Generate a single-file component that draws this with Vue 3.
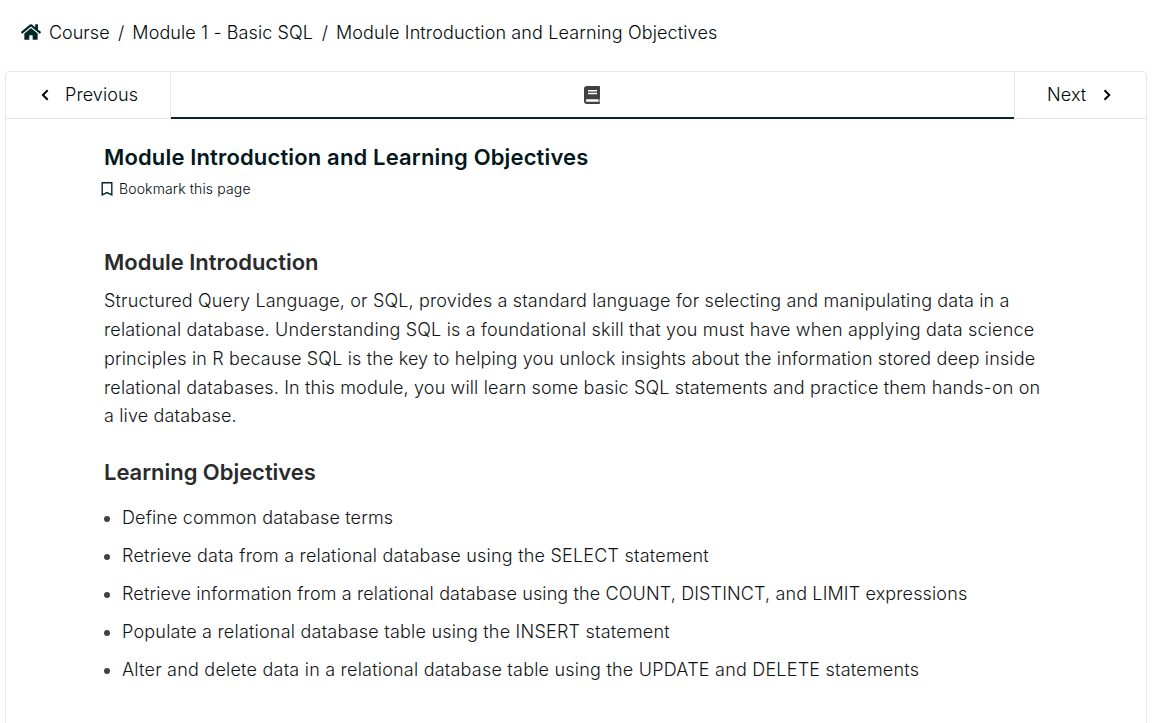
<script setup>
const paragraph = [
  'Structured Query Language, or SQL, provides a standard language for selecting and manipulating data in a',
  'relational database. Understanding SQL is a foundational skill that you must have when applying data science',
  'principles in R because SQL is the key to helping you unlock insights about the information stored deep inside',
  'relational databases. In this module, you will learn some basic SQL statements and practice them hands-on on',
  'a live database.',
]
const objectives = [
  'Define common database terms',
  'Retrieve data from a relational database using the SELECT statement',
  'Retrieve information from a relational database using the COUNT, DISTINCT, and LIMIT expressions',
  'Populate a relational database table using the INSERT statement',
  'Alter and delete data in a relational database table using the UPDATE and DELETE statements',
]
</script>

<template>
  <div class="page">
    <nav class="crumbs">
      <svg class="home" viewBox="0 0 576 512"><path fill="currentColor" d="M280.4 148.3 96 300.1V464a16 16 0 0 0 16 16l112.1-.3a16 16 0 0 0 15.9-16V368a16 16 0 0 1 16-16h64a16 16 0 0 1 16 16v95.6a16 16 0 0 0 16 16.1L464 480a16 16 0 0 0 16-16V300L295.7 148.3a12.2 12.2 0 0 0-15.3 0zM571.6 251.5 488 182.6V44a12 12 0 0 0-12-12h-56a12 12 0 0 0-12 12v72.6L318.5 43a48 48 0 0 0-61 0L4.3 251.5a12 12 0 0 0-1.6 16.9l25.5 31a12 12 0 0 0 16.9 1.6l235.2-193.7a12.2 12.2 0 0 1 15.3 0L530.9 301a12 12 0 0 0 16.9-1.6l25.5-31a12 12 0 0 0-1.7-16.9z"/></svg>
      <span>Course</span><span class="sep">/</span><span class="module">Module 1 - Basic SQL</span><span class="sep">/</span><span class="current">Module Introduction and Learning Objectives</span>
    </nav>
    <main class="panel">
      <div class="tabs">
        <button class="prev"><svg class="chev" viewBox="0 0 8 12"><path d="M6.7 1.2 1.9 6l4.8 4.8"/></svg><span>Previous</span></button>
        <div class="tab"><svg class="book" viewBox="0 0 16 18"><path fill="currentColor" fill-rule="evenodd" d="M3 0H15a1 1 0 0 1 1 1v11.7a1 1 0 0 1-.5.8v2.4a.9.9 0 0 1 .5.8v.4a.9.9 0 0 1-.9.9H3A3 3 0 0 1 0 15V3A3 3 0 0 1 3 0zM4 4v1.500h9V4zm0 2.700v1.500h9V6.700zM3 13.300a1.200 1.200 0 0 0 0 2.400h11.500v-2.400z"/></svg></div>
        <button class="next"><span>Next</span><svg class="chev" viewBox="0 0 8 12"><path d="m1.5 1.2 4.8 4.8-4.8 4.8"/></svg></button>
      </div>
      <article class="content">
        <h1>Module Introduction and Learning Objectives</h1>
        <div class="bookmark"><svg viewBox="0 0 12 14"><path d="M1.2.8h9.600v12L6 10.500l-4.800 2.300z"/></svg><span>Bookmark this page</span></div>
        <h2>Module Introduction</h2>
        <p><span v-for="line in paragraph" :key="line">{{ line }}</span></p>
        <h2 class="second">Learning Objectives</h2>
        <ul><li v-for="item in objectives" :key="item">{{ item }}</li></ul>
      </article>
    </main>
  </div>
</template>

<style>
body { background: #fff; }
html, body { overflow: hidden; }
</style>
<style scoped>
.page { height: 723px; overflow: hidden; box-sizing: border-box; padding: 19px 13px 0 5px; font-family: Inter, sans-serif; font-size: 18px; font-weight: 300; color: #111416; }
.crumbs { display: flex; align-items: center; height: 26px; padding-left: 16px; color: #00080a; white-space: nowrap; }
.home { width: 20px; height: 18px; margin-right: 8px; color: #03262a; }
.sep { margin: 0 8px 0 8.5px; }
.module { letter-spacing: .1px; }
.current { letter-spacing: .125px; }
.panel { margin-top: 26px; height: 660px; border: 1px solid #e7e7e7; border-radius: 4px 4px 0 0; }
.tabs { display: flex; height: 47px; }
button { box-sizing: border-box; height: 47px; display: flex; align-items: center; background: none; border: 0; border-bottom: 1px solid #e7e7e7; padding: 0; font: inherit; color: #00080a; }
button span { padding-bottom: 2px; }
.prev { width: 165px; padding-left: 35px; border-right: 1px solid #e7e7e7; gap: 16px; letter-spacing: .1px; }
.next { width: 132px; padding-left: 32px; border-left: 1px solid #e7e7e7; gap: 17px; letter-spacing: .1px; }
.chev { width: 8px; height: 12px; fill: none; stroke: currentColor; stroke-width: 2; }
.tab { flex: 1; box-sizing: border-box; height: 47px; display: flex; align-items: center; justify-content: center; border-bottom: 2px solid #03262a; }
.book { width: 16px; height: 18px; margin: 1px 1px 0 0; color: #414141; }
.content { padding: 23px 0 0 98px; }
h1, h2, p, ul { margin: 0; }
h1 { font-size: 22px; line-height: 30px; font-weight: 600; letter-spacing: .15px; color: #03181b; }
.bookmark { display: flex; align-items: center; gap: 6.500px; height: 20px; margin: 6px 0 0 -3.500px; font-size: 14px; font-weight: 300; letter-spacing: .14px; color: #00080a; }
.bookmark svg { width: 12px; height: 14px; margin-top: 2px; fill: none; stroke: #03262a; stroke-width: 1.4; }
.bookmark span { margin-top: 1px; }
h2 { font-size: 22px; line-height: 30px; font-weight: 600; margin-top: 49px; color: #292b2c; }
p { margin-top: 10.2px; line-height: 28.8px; letter-spacing: .15px; }
p span { display: block; white-space: nowrap; }
p span:nth-child(2) { letter-spacing: .167px; }
p span:nth-child(3) { letter-spacing: .14px; }
.second { margin-top: 25.8px; letter-spacing: -.04px; }
ul { list-style: none; padding: 0; margin-top: 17px; }
li { display: flex; align-items: center; line-height: 28px; margin-bottom: 10px; white-space: nowrap; letter-spacing: .215px; }
li:nth-child(1), li:nth-child(3) { letter-spacing: .135px; }
li::before { content: ''; width: 6px; height: 6px; border-radius: 50%; background: #414141; margin-right: 12px; position: relative; top: 1px; }
</style>
